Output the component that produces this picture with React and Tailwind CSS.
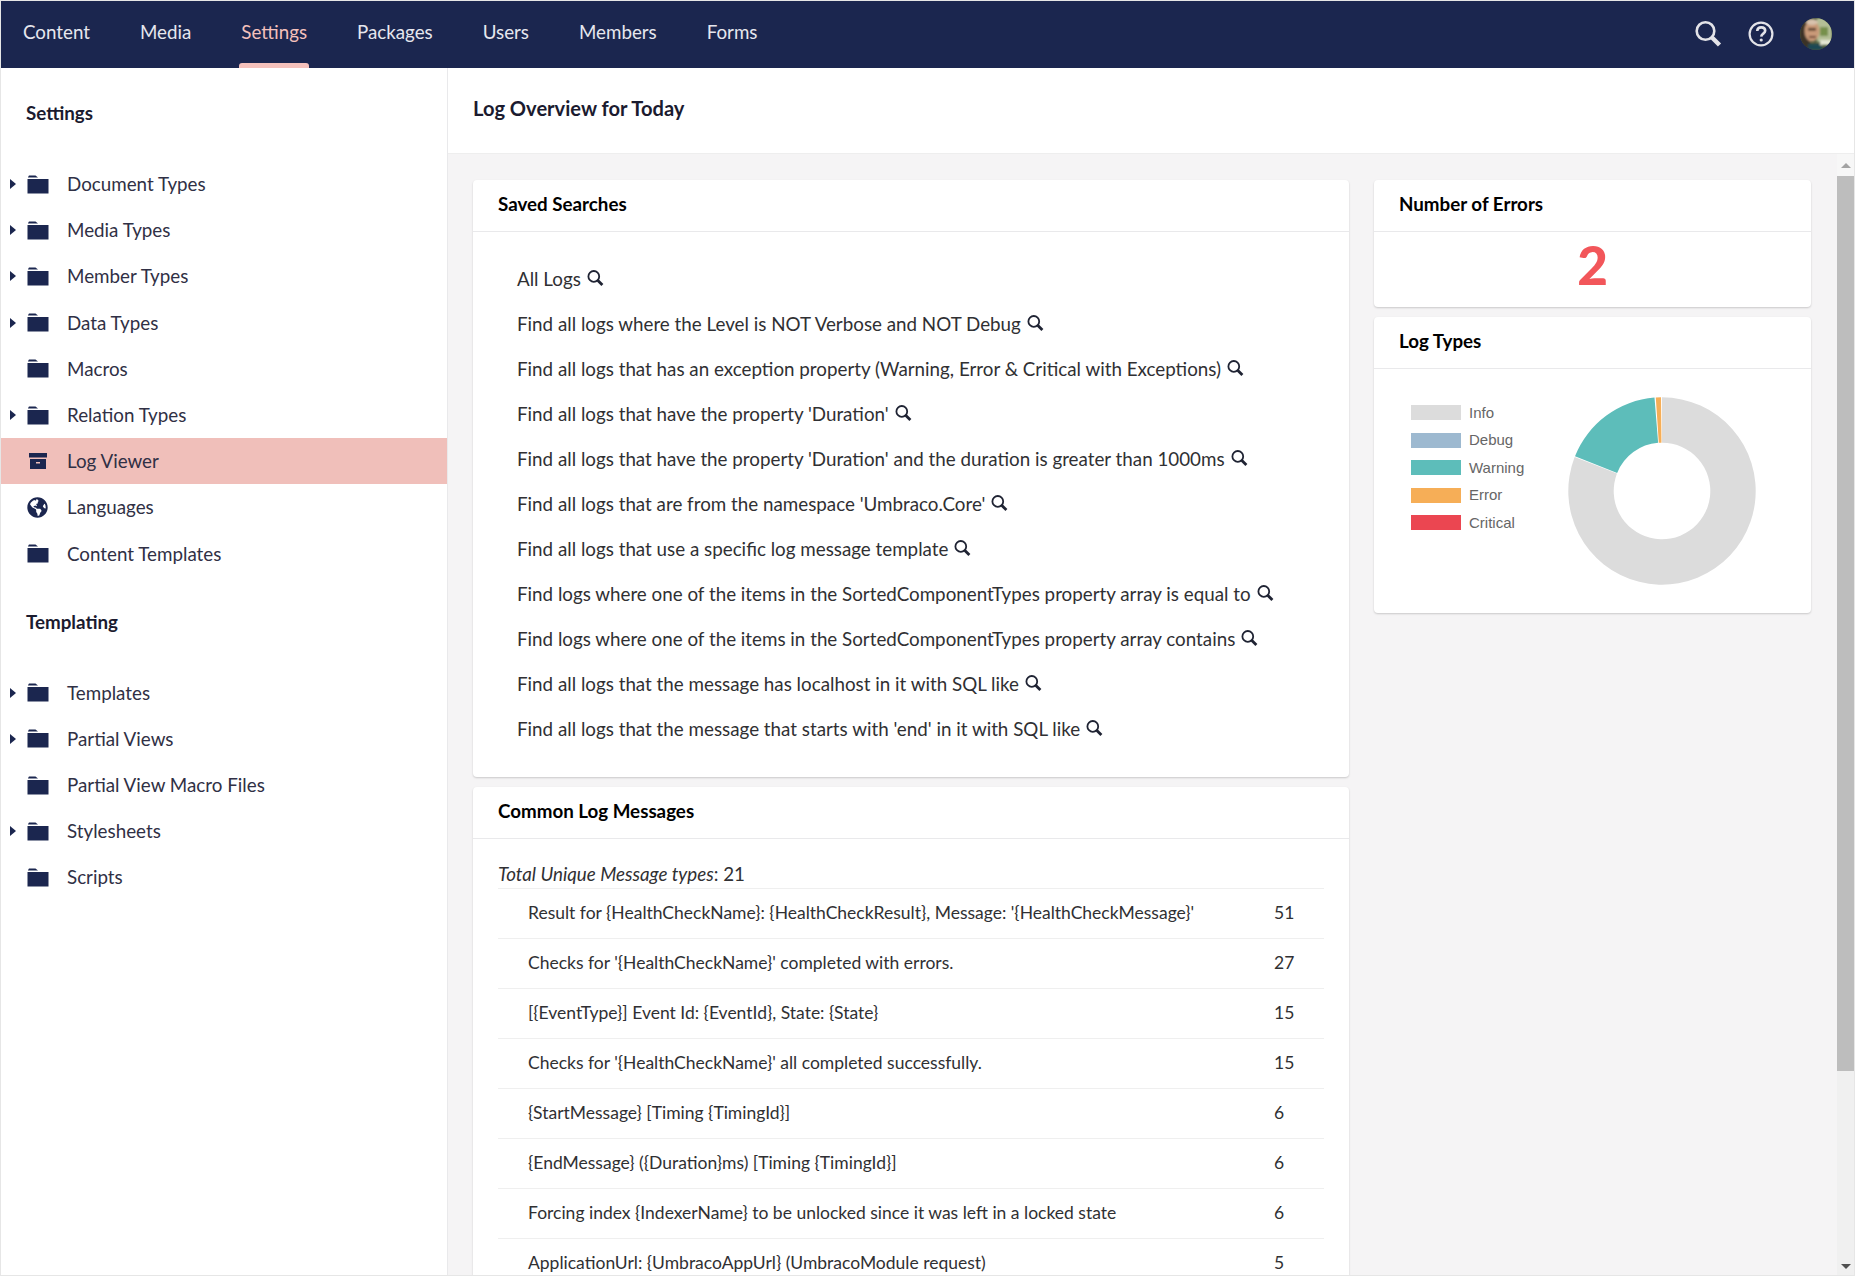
import React from 'react';
import { FaGlobeAmericas } from 'react-icons/fa';

const navItems = ['Content', 'Media', 'Settings', 'Packages', 'Users', 'Members', 'Forms'];

const settingsTree = [
  { name: 'Document Types', arrow: true },
  { name: 'Media Types', arrow: true },
  { name: 'Member Types', arrow: true },
  { name: 'Data Types', arrow: true },
  { name: 'Macros' },
  { name: 'Relation Types', arrow: true },
  { name: 'Log Viewer', icon: 'box', active: true },
  { name: 'Languages', icon: 'globe' },
  { name: 'Content Templates' },
];

const templatingTree = [
  { name: 'Templates', arrow: true },
  { name: 'Partial Views', arrow: true },
  { name: 'Partial View Macro Files' },
  { name: 'Stylesheets', arrow: true },
  { name: 'Scripts' },
];

const savedSearches = [
  'All Logs',
  'Find all logs where the Level is NOT Verbose and NOT Debug',
  'Find all logs that has an exception property (Warning, Error & Critical with Exceptions)',
  "Find all logs that have the property 'Duration'",
  "Find all logs that have the property 'Duration' and the duration is greater than 1000ms",
  "Find all logs that are from the namespace 'Umbraco.Core'",
  'Find all logs that use a specific log message template',
  'Find logs where one of the items in the SortedComponentTypes property array is equal to',
  'Find logs where one of the items in the SortedComponentTypes property array contains',
  'Find all logs that the message has localhost in it with SQL like',
  "Find all logs that the message that starts with 'end' in it with SQL like",
];

const commonMessages = [
  ["Result for {HealthCheckName}: {HealthCheckResult}, Message: '{HealthCheckMessage}'", 51],
  ["Checks for '{HealthCheckName}' completed with errors.", 27],
  ['[{EventType}] Event Id: {EventId}, State: {State}', 15],
  ["Checks for '{HealthCheckName}' all completed successfully.", 15],
  ['{StartMessage} [Timing {TimingId}]', 6],
  ['{EndMessage} ({Duration}ms) [Timing {TimingId}]', 6],
  ['Forcing index {IndexerName} to be unlocked since it was left in a locked state', 6],
  ['ApplicationUrl: {UmbracoAppUrl} (UmbracoModule request)', 5],
];

const legend = [
  { label: 'Info', swatch: 'bg-[#dcdcdc]' },
  { label: 'Debug', swatch: 'bg-[#9db9d0]' },
  { label: 'Warning', swatch: 'bg-[#5dbdba]' },
  { label: 'Error', swatch: 'bg-[#f6ae57]' },
  { label: 'Critical', swatch: 'bg-[#eb4651]' },
];

// Ring segment between two angles, measured clockwise from the top
const arcPath = (start, end, outer, inner) => {
  const point = (r, deg) => {
    const a = ((deg - 90) * Math.PI) / 180;
    return `${(r * Math.cos(a)).toFixed(2)} ${(r * Math.sin(a)).toFixed(2)}`;
  };
  const large = end - start > 180 ? 1 : 0;
  return `M${point(outer, start)} A${outer} ${outer} 0 ${large} 1 ${point(outer, end)} L${point(inner, end)} A${inner} ${inner} 0 ${large} 0 ${point(inner, start)} Z`;
};

const FolderIcon = () => (
  <svg width="22" height="19" viewBox="0 0 22 19" fill="#1b264f">
    <path d="M1 2.2 L2 .6 H8.5 L11 2.6 H1 Z" />
    <rect x="0.5" y="4" width="21" height="14.5" />
  </svg>
);

const BoxIcon = () => (
  <svg width="22" height="18" viewBox="0 0 22 18" fill="#1b264f">
    <rect x="2" y="1" width="18" height="4.5" />
    <path fillRule="evenodd" d="M3 7 H19 V17 H3 Z M9 10 V11.5 H13 V10 Z" />
  </svg>
);

const SmallSearch = () => (
  <svg width="17" height="16" viewBox="0 0 17 16" fill="none" stroke="#1f2333" className="inline-block align-[0px] ml-[6px]">
    <circle cx="6.8" cy="6.4" r="5.4" strokeWidth="1.8" />
    <path d="M10.6 10.2 L15.4 15" strokeWidth="2.8" />
  </svg>
);

const TreeRow = ({ name, arrow, icon, active }) => (
  <div className={`flex items-center h-[46.2px] pl-[9px] ${active ? 'bg-[#f0bfba]' : ''}`}>
    <div className="w-[17px] flex items-center">
      {arrow && <div className="w-0 h-0 border-y-[5px] border-y-transparent border-l-[6px] border-l-[#1b264f]" />}
    </div>
    <div className="w-[40px] flex items-center">
      {icon === 'box' ? <BoxIcon /> : icon === 'globe' ? <FaGlobeAmericas size={21} color="#1b264f" /> : <FolderIcon />}
    </div>
    <span className="text-[18.8px] text-[#303045]">{name}</span>
  </div>
);

const TreeHeading = ({ children }) => (
  <div className="pt-[34px] h-[93px] pl-[25px] text-[18.75px] leading-[22px] font-bold text-[#1b1b2f]">{children}</div>
);

const Card = ({ title, children, className = '' }) => (
  <div className={`bg-white rounded-[4px] shadow-[0_1px_2px_rgba(0,0,0,0.18)] ${className}`}>
    <div className="h-[52px] border-b border-[#e9e9eb] px-[25px] pt-[11.5px] text-[18.75px] leading-[24px] font-bold text-black">{title}</div>
    {children}
  </div>
);

const Donut = () => (
  <svg width="190" height="190" viewBox="-95 -95 190 190" className="mt-[27px] -ml-[2px] shrink-0">
    <path d={arcPath(0, 291.2, 93.7, 48.3)} fill="#dcdcdc" />
    <path d={arcPath(291.8, 355.4, 93.7, 48.3)} fill="#5dbdba" />
    <path d={arcPath(356.2, 359.4, 93.7, 48.3)} fill="#f6ae57" />
  </svg>
);

const Avatar = () => (
  <svg width="32" height="32" viewBox="0 0 32 32">
    <defs>
      <clipPath id="avatarClip"><circle cx="16" cy="16" r="16" /></clipPath>
      <filter id="avatarBlur"><feGaussianBlur stdDeviation="1" /></filter>
    </defs>
    <g clipPath="url(#avatarClip)">
      <rect width="32" height="32" fill="#4c5a3c" />
      <g filter="url(#avatarBlur)">
        <rect x="17" y="0" width="15" height="24" fill="#b4bf96" />
        <rect x="20" y="9" width="8" height="9" fill="#76904c" />
        <rect x="0" y="0" width="10" height="32" fill="#3a3028" />
        <ellipse cx="12" cy="13" rx="7.5" ry="10.5" fill="#c99a78" />
        <ellipse cx="12" cy="4" rx="6" ry="3" fill="#d8c2ad" />
        <rect x="8" y="10" width="8" height="2.5" fill="#4e3426" />
        <rect x="9" y="18" width="7" height="2" fill="#6b3f30" />
        <rect x="8" y="26" width="14" height="6" fill="#1f4a55" />
        <rect x="20" y="22" width="12" height="5" fill="#e3e6d2" />
      </g>
    </g>
  </svg>
);

const Scrollbar = () => (
  <div className="w-[17px] shrink-0 flex flex-col bg-[#f0f0f0]">
    <div className="h-[22px] bg-[#f7f7f7] flex items-center justify-center">
      <div className="w-0 h-0 border-x-[5px] border-x-transparent border-b-[5px] border-b-[#a3a3a3]" />
    </div>
    <div className="h-[895px] bg-[#bdbdbd]" />
    <div className="flex-1" />
    <div className="h-[17px] flex items-center justify-center">
      <div className="w-0 h-0 border-x-[5px] border-x-transparent border-t-[5px] border-t-[#505050]" />
    </div>
  </div>
);

export default function App() {
  return (
    <div className="h-screen w-full flex flex-col overflow-hidden border border-[#e6e6e6] bg-white font-['Lato','Noto_Sans',sans-serif]">
      {/* Top navigation */}
      <header className="h-[67px] shrink-0 bg-[#1b264f] flex items-stretch pl-[22px] pr-[22px]">
        <nav className="flex gap-[50px] flex-1">
          {navItems.map((item) => (
            <div key={item} className={`relative pt-[19px] text-[18.75px] leading-[24px] ${item === 'Settings' ? 'text-[#f5c1bc]' : 'text-[#e6e7ee]'}`}>
              {item}
              {item === 'Settings' && (
                <div className="absolute -left-[2px] -right-[2px] bottom-0 h-[5px] bg-[#f5c1bc] rounded-t-[3px]" />
              )}
            </div>
          ))}
        </nav>
        <div className="flex items-center gap-[26px] pb-[2px]">
          <svg width="28" height="28" viewBox="0 0 28 28" fill="none" stroke="#e3e3e8">
            <circle cx="11.5" cy="11" r="8.8" strokeWidth="2.6" />
            <path d="M18 17.5 L25.5 25" strokeWidth="4.4" />
          </svg>
          <svg width="26" height="26" viewBox="0 0 26 26" fill="none" stroke="#e3e3e8">
            <circle cx="13" cy="13" r="11.4" strokeWidth="2.2" />
            <path d="M9.2 10 C9.4 7.6 11 6.4 13.2 6.4 C15.6 6.4 17.2 7.8 17.2 9.8 C17.2 12.6 13.4 12.6 13.2 15.6" strokeWidth="2.6" />
            <circle cx="13.2" cy="19" r="1.6" fill="#e3e3e8" stroke="none" />
          </svg>
          <Avatar />
        </div>
      </header>

      <div className="flex-1 flex min-h-0">
        {/* Section tree */}
        <aside className="w-[447px] shrink-0 border-r border-[#e9e9eb]">
          <TreeHeading>Settings</TreeHeading>
          {settingsTree.map((row) => <TreeRow key={row.name} {...row} />)}
          <TreeHeading>Templating</TreeHeading>
          {templatingTree.map((row) => <TreeRow key={row.name} {...row} />)}
        </aside>

        <main className="flex-1 flex flex-col min-w-0">
          <div className="h-[86px] shrink-0 border-b border-[#eeeeee] pl-[25px] pt-[28px] text-[20.1px] leading-[24px] font-bold text-[#1b1b2f]">
            Log Overview for Today
          </div>

          <div className="flex-1 flex min-h-0 bg-[#f5f4f5]">
            <div className="flex-1 overflow-hidden pt-[26px] pl-[25px] flex gap-[25px] items-start">
              {/* Left column */}
              <div className="w-[876px] shrink-0 flex flex-col gap-[10px]">
                <Card title="Saved Searches">
                  <div className="pl-[44px] pt-[25px] pb-[25px]">
                    {savedSearches.map((search) => (
                      <div key={search} className="h-[45px] flex items-center text-[18.8px] text-[#303033]">
                        <span>{search}<SmallSearch /></span>
                      </div>
                    ))}
                  </div>
                </Card>
                <Card title="Common Log Messages">
                  <div className="px-[25px] pt-[23px] pb-[20px] text-[#303033]">
                    <div className="leading-[24px] h-[26px] text-[18.75px]"><em>Total Unique Message types</em>: 21</div>
                    {commonMessages.map(([message, count]) => (
                      <div key={message} className="h-[50px] flex items-center border-t border-[#efefef] pl-[30px] pb-[1px] text-[17.5px]">
                        <span className="flex-1">{message}</span>
                        <span className="w-[50px]">{count}</span>
                      </div>
                    ))}
                  </div>
                </Card>
              </div>

              {/* Right column */}
              <div className="w-[437px] shrink-0 flex flex-col gap-[10px]">
                <Card title="Number of Errors">
                  <div className="h-[75px] flex justify-center text-[53px] leading-[66px] font-black text-[#f2565a]">2</div>
                </Card>
                <Card title="Log Types">
                  <div className="h-[244px] flex pl-[37px]">
                    <div className="w-[158px] shrink-0 pt-[30px]">
                      {legend.map((item) => (
                        <div key={item.label} className="h-[27.5px] flex items-center gap-[8px] font-['Liberation_Sans',sans-serif] text-[15px] text-[#666666]">
                          <div className={`w-[50px] h-[15px] ${item.swatch}`} />
                          {item.label}
                        </div>
                      ))}
                    </div>
                    <Donut />
                  </div>
                </Card>
              </div>
            </div>
            <Scrollbar />
          </div>
        </main>
      </div>
    </div>
  );
}
